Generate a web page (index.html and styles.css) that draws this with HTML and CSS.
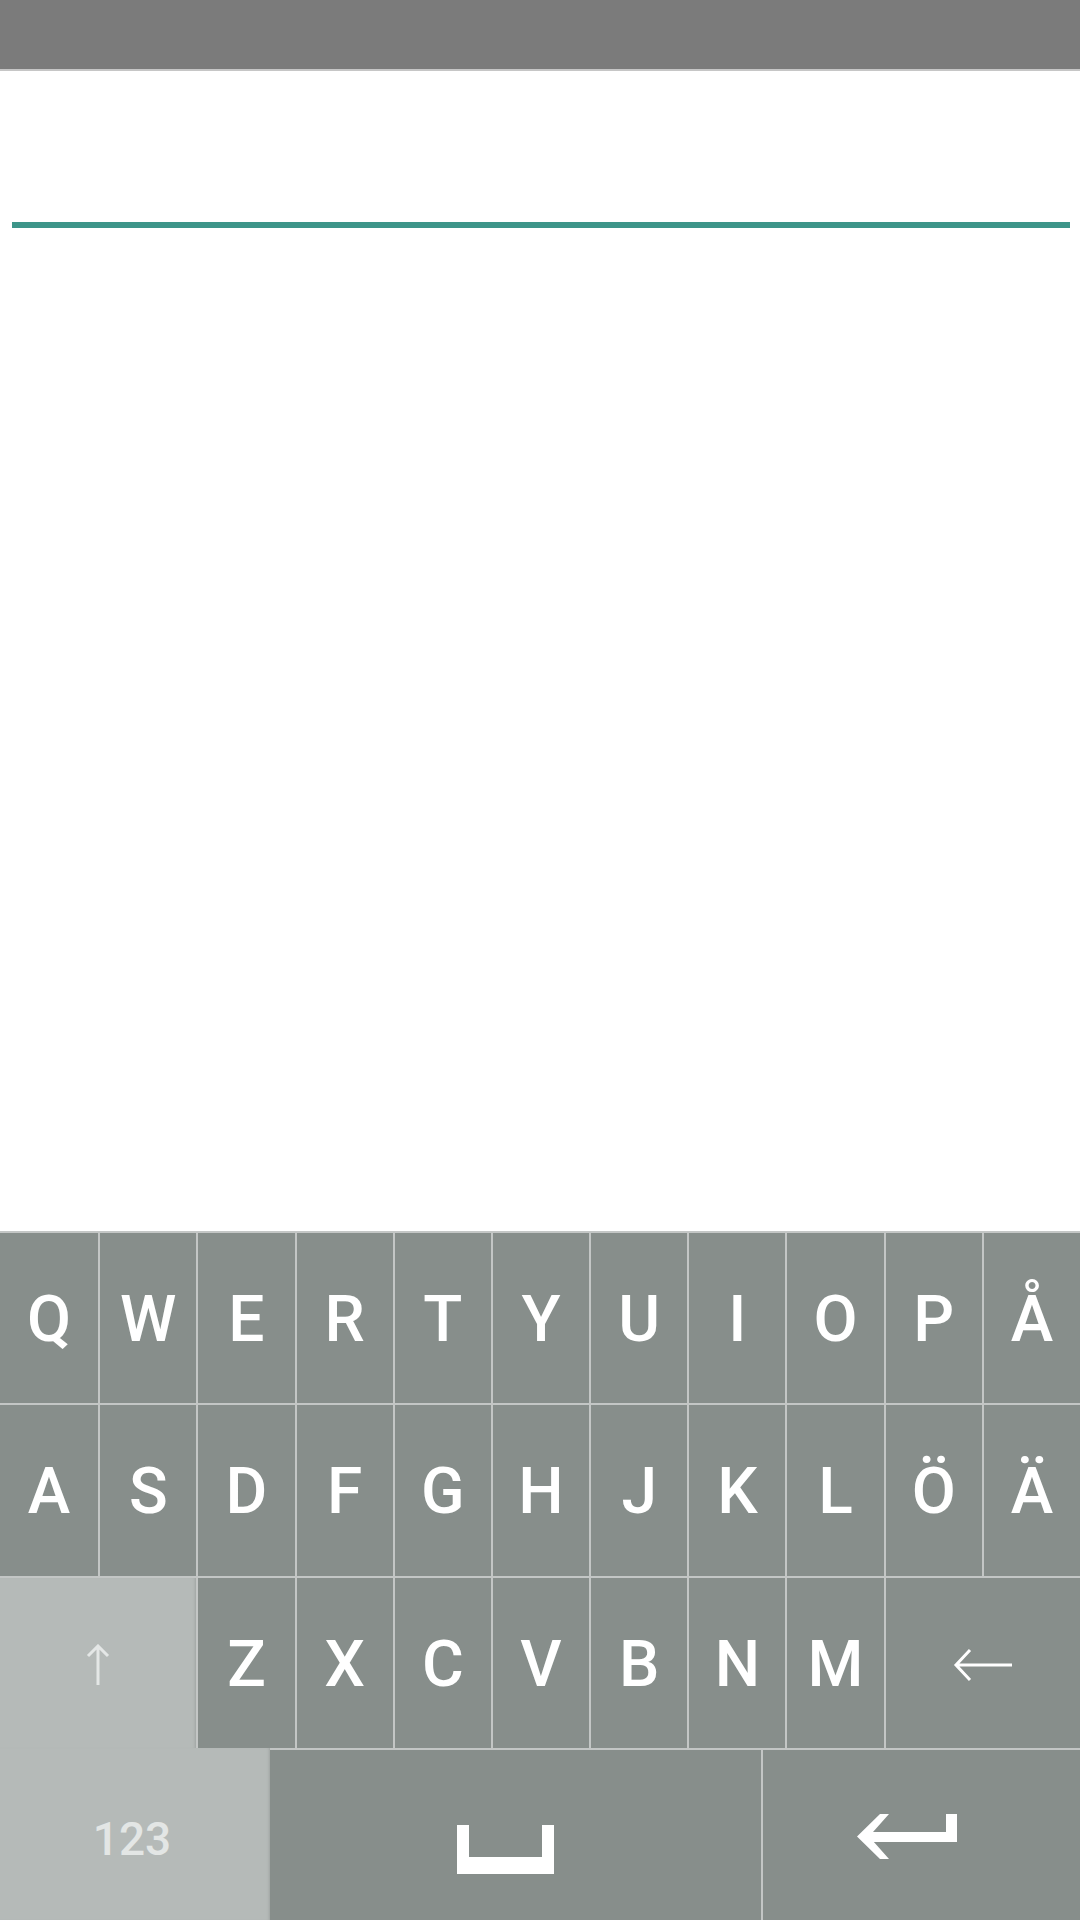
FILE: index.html
```html
<!DOCTYPE html>
<html lang="sv">
<head>
<meta charset="utf-8">
<title>Keyboard</title>
<link rel="stylesheet" href="styles.css">
</head>
<body>
<div class="screen">
  <div class="status"></div>
  <div class="content">
    <div class="field"></div>
  </div>
  <div class="keyboard">
    <div class="key">Q</div><div class="key">W</div><div class="key">E</div><div class="key">R</div><div class="key">T</div><div class="key">Y</div><div class="key">U</div><div class="key">I</div><div class="key">O</div><div class="key">P</div><div class="key">Å</div>
    <div class="key">A</div><div class="key">S</div><div class="key">D</div><div class="key">F</div><div class="key">G</div><div class="key">H</div><div class="key">J</div><div class="key">K</div><div class="key">L</div><div class="key">Ö</div><div class="key">Ä</div>
    <div class="key shift"><svg width="24" height="42" viewBox="0 0 24 42"><path d="M12 41V2M2 12L12 2L22 12" fill="none" stroke="#e4e7e6" stroke-width="3"/></svg></div>
    <div class="key">Z</div><div class="key">X</div><div class="key">C</div><div class="key">V</div><div class="key">B</div><div class="key">N</div><div class="key">M</div>
    <div class="key wide"><svg width="60" height="34" viewBox="0 0 60 34"><path d="M59 17H3M17 2L3 17L17 32" fill="none" stroke="#ffffff" stroke-width="3"/></svg></div>
    <div class="key num">123</div>
    <div class="key space"><svg class="space-icon" width="97" height="49" viewBox="0 0 97 49"><polygon points="0,0 12,0 12,32 85,32 85,0 97,0 97,49 0,49" fill="#ffffff"/></svg></div>
    <div class="key enter"><svg class="enter-icon" width="100" height="45" viewBox="0 0 100 45"><rect x="89" y="0" width="11" height="28" fill="#ffffff"/><rect x="10" y="18" width="90" height="10" fill="#ffffff"/><polygon points="0,22.5 23,0 32,0 12,22.5 32,45 23,45" fill="#ffffff"/></svg></div>
  </div>
</div>
</body>
</html>
```
FILE: styles.css
```css
html, body {
  margin: 0;
  padding: 0;
  background: #ffffff;
}
.screen {
  width: 1080px;
  height: 1920px;
  display: flex;
  flex-direction: column;
  overflow: hidden;
  font-family: Roboto, "Noto Sans", sans-serif;
}
.status {
  height: 69px;
  flex: none;
  background: #7b7b7b;
  border-bottom: 2px solid #c6c6c6;
}
.content {
  flex: 1;
  background: #ffffff;
  padding-top: 151px;
}
.field {
  height: 6px;
  margin: 0 10px 0 12px;
  background: #3d9589;
}
.keyboard {
  flex: none;
  height: 689px;
  display: grid;
  grid-template-columns: repeat(44, 1fr);
  grid-template-rows: repeat(4, 1fr);
  background: #878e8b;
}
.key {
  grid-column: span 4;
  box-sizing: border-box;
  border-top: 2px solid #c3c6c5;
  border-left: 2px solid #c3c6c5;
  background: #878e8b;
  color: #ffffff;
  font-size: 64px;
  font-weight: 500;
  line-height: 1;
  display: flex;
  align-items: center;
  justify-content: center;
  padding-top: 4px;
}
.key:nth-child(1), .key:nth-child(12) {
  border-left: none;
}
.shift {
  grid-column: span 8;
  border-left: none;
  background: #b5bab8;
  box-shadow: inset -3px 0 3px -2px rgba(0, 0, 0, 0.12);
}
.wide {
  grid-column: span 8;
}
.num {
  grid-column: span 11;
  border-left: none;
  border-top: none;
  background: #b5bab8;
  color: #e3e6e5;
  font-size: 46px;
  font-weight: 500;
  padding: 10px 6px 0 0;
  box-shadow: inset -3px 0 3px -2px rgba(0, 0, 0, 0.12);
}
.space {
  grid-column: span 20;
  border-left: none;
}
.space-icon {
  margin: 26px 20px 0 0;
}
.enter {
  grid-column: span 13;
}
.enter-icon {
  margin: 0 28px 0 0;
}
```
